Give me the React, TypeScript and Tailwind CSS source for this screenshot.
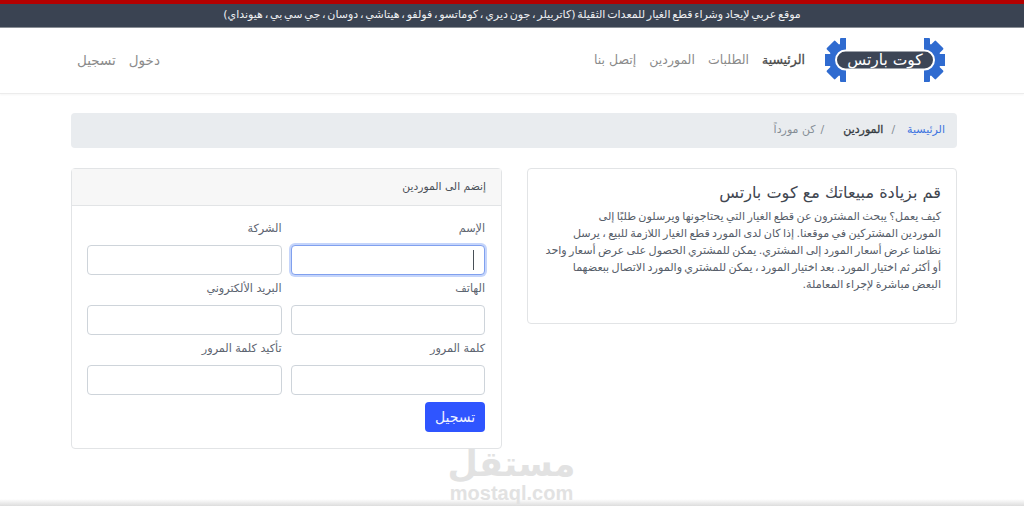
import React from "react";

const font = { fontFamily: '"DejaVu Sans", "Noto Sans", sans-serif' };

const paragraphLines = [
  "كيف يعمل؟ يبحث المشترون عن قطع الغيار التي يحتاجونها ويرسلون طلبًا إلى",
  "الموردين المشتركين في موقعنا. إذا كان لدى المورد قطع الغيار اللازمة للبيع ، يرسل",
  "نظامنا عرض أسعار المورد إلى المشتري. يمكن للمشتري الحصول على عرض أسعار واحد",
  "أو أكثر ثم اختيار المورد. بعد اختيار المورد ، يمكن للمشتري والمورد الاتصال ببعضهما",
  "البعض مباشرة لإجراء المعاملة.",
];

function HalfGear({ cx, clip }: { cx: number; clip: string }) {
  const angles = [-90, -45, 0, 45, 90];
  return (
    <g clipPath={`url(#${clip})`} fill="#2f6bd0">
      <circle cx={cx} cy="23" r="17" />
      {angles.map((a) => (
        <rect key={a} x={cx - 22} y="17" width="12" height="12" rx="1" transform={`rotate(${a} ${cx} 23)`} />
      ))}
    </g>
  );
}

function Logo() {
  return (
    <svg width="120" height="46" viewBox="0 0 120 46" className="block">
      <defs>
        <clipPath id="gl">
          <rect x="0" y="0" width="21" height="46" />
        </clipPath>
      </defs>
      <HalfGear cx={21} clip="gl" />
      <g transform="translate(120 0) scale(-1 1)">
        <HalfGear cx={21} clip="gl" />
      </g>
      <rect x="11" y="13.5" width="98" height="19" rx="9.5" fill="#3d4656" stroke="#fff" strokeWidth="2" />
      <text x="60" y="28" textAnchor="middle" direction="rtl" fill="#fff" fontSize="15.5" style={{ fontFamily: '"DejaVu Sans", sans-serif' }}>
        كوت بارتس
      </text>
    </svg>
  );
}

function Field({ label, focused }: { label: string; focused?: boolean }) {
  return (
    <div className="flex flex-col">
      <label className="h-[24px] text-[11.2px] leading-[16px] text-[#5c6470]">{label}</label>
      <div
        className={
          focused
            ? "relative h-[30px] rounded-[4px] border border-[#80a0ee] bg-white shadow-[0_0_0_2px_#c5d5fb]"
            : "h-[30px] rounded-[4px] border border-[#ced4da] bg-white"
        }
      >
        {focused && <span className="absolute right-[10px] top-[4px] h-[20px] w-px bg-[#495057]" />}
      </div>
    </div>
  );
}

export default function App() {
  return (
    <div dir="rtl" style={font} className="relative h-[514px] w-[1024px] overflow-hidden bg-white text-[#495057]">
      <div className="h-[4px] bg-[#b30000]" />
      <div className="flex h-[24px] items-center justify-center border-b border-[#8a8f96] bg-[#3a4352] text-[11px] text-[#eef0f2] [word-spacing:-1.7px]">
        موقع عربي لإيجاد وشراء قطع الغيار للمعدات الثقيلة (كاتربيلر ، جون ديري ، كوماتسو ، فولفو ، هيتاشي ، دوسان ، جي سي بي ، هيونداي)
      </div>

      <nav className="flex h-[66px] items-center border-b border-[#ececec] pb-[1px] pl-[77px] pr-[79px] shadow-[0_1px_2px_rgba(0,0,0,0.04)]">
        <Logo />
        <ul className="mr-[20px] flex items-center gap-[13px] text-[12.5px] text-[#8b8b8b]">
          <li className="text-[#4a4a4a] [-webkit-text-stroke:0.3px_#4a4a4a]">الرئيسية</li>
          <li>الطلبات</li>
          <li>الموردين</li>
          <li>إتصل بنا</li>
        </ul>
        <ul className="mr-auto flex items-center gap-[13px] text-[13.5px] text-[#8b8b8b]">
          <li>دخول</li>
          <li>تسجيل</li>
        </ul>
      </nav>

      <main className="mr-[67px] w-[886px] pt-[19px]">
        <div className="flex h-[35px] items-center rounded-[4px] bg-[#e9ecef] pr-[12px] text-[11px]">
          <span className="text-[#3d74e0]">الرئيسية</span>
          <span className="mr-[12px] ml-[8px] text-[#868e96]">/</span>
          <span className="text-[#343a40] [-webkit-text-stroke:0.3px_#343a40]">الموردين</span>
          <span className="mr-[19px] ml-[5px] text-[#868e96]">/</span>
          <span className="text-[#868e96]">كن مورداً</span>
        </div>

        <div className="mt-[20px] grid grid-cols-[430px_431px] items-start gap-[25px]">
          <section className="h-[156px] rounded-[4px] border border-[#e2e4e6] pl-[10px] pr-[15px] pt-[13px]">
            <h2 className="text-[16.1px] font-normal leading-[22px] text-[#3f4650]">قم بزيادة مبيعاتك مع كوت بارتس</h2>
            <p className="mt-[4px] whitespace-nowrap text-[11.15px] leading-[17px] text-[#565d69] [word-spacing:-1.2px]">
              {paragraphLines.map((line) => (
                <span key={line} className="block">{line}</span>
              ))}
            </p>
          </section>

          <section className="h-[281px] rounded-[4px] border border-[#e2e4e6]">
            <div className="flex h-[37px] items-center border-b border-[#e2e4e6] bg-[#f7f7f7] pl-[15px] pr-[15px] text-[10.75px] text-[#4a5058]">
              إنضم الى الموردين
            </div>
            <div className="pl-[15px] pr-[16px] pt-[15px]">
              <div className="grid grid-cols-2 gap-x-[9px] gap-y-[6px]">
                <Field label="الإسم" focused />
                <Field label="الشركة" />
                <Field label="الهاتف" />
                <Field label="البريد الألكتروني" />
                <Field label="كلمة المرور" />
                <Field label="تأكيد كلمة المرور" />
              </div>
              <button className="mt-[7px] h-[30px] w-[60px] rounded-[4px] bg-[#2f55ff] text-[14px] text-[#f0f3ff]">تسجيل</button>
            </div>
          </section>
        </div>
      </main>

      <div className="absolute inset-x-0 top-[499px] h-[7px] bg-gradient-to-b from-white to-[#dddddd]" />
      <div className="absolute left-[449px] top-[445px] flex w-[125px] flex-col items-center text-[#e2e2e2]">
        <span className="text-[35px] font-bold leading-[38px]">مستقل</span>
        <span dir="ltr" className="text-[20px] font-bold leading-[20px]" style={{ fontFamily: '"Liberation Sans", sans-serif' }}>mostaql.com</span>
      </div>
    </div>
  );
}
